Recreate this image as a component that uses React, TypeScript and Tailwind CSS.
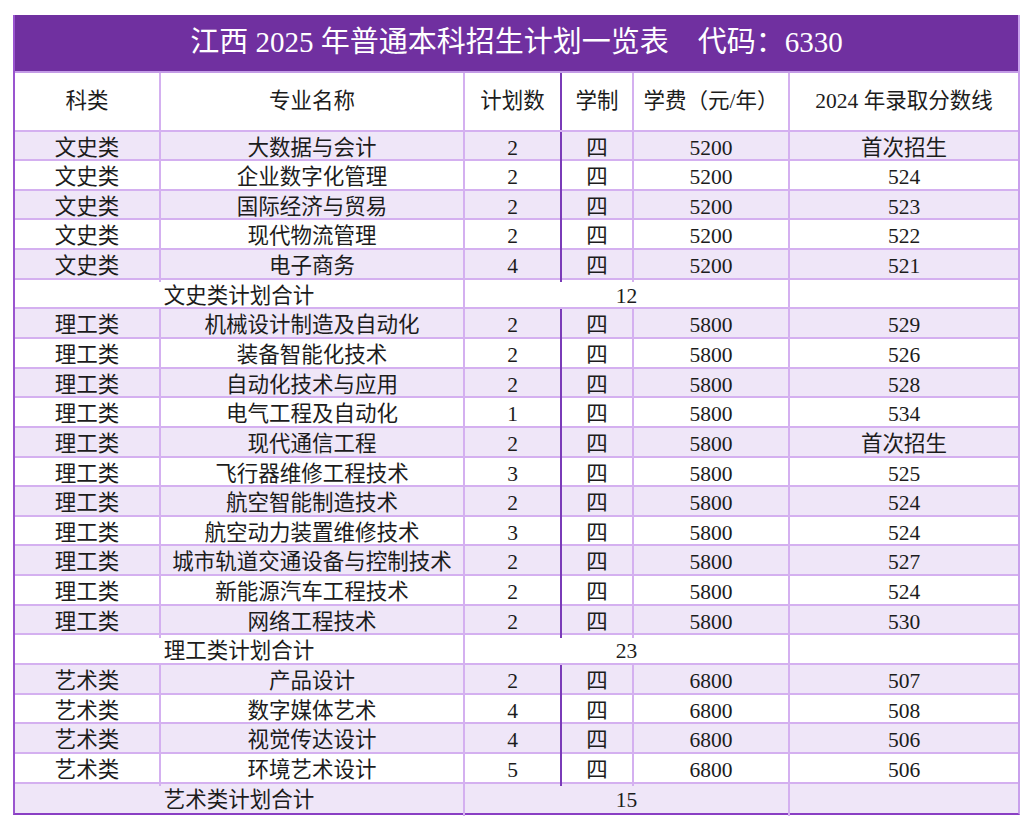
import React from "react";

type Row =
  | { kind: "data"; cat: string; name: string; n: string; fee: string; score: string }
  | { kind: "sum"; label: string; total: string };

const rows: Row[] = [
  { kind: "data", cat: "文史类", name: "大数据与会计", n: "2", fee: "5200", score: "首次招生" },
  { kind: "data", cat: "文史类", name: "企业数字化管理", n: "2", fee: "5200", score: "524" },
  { kind: "data", cat: "文史类", name: "国际经济与贸易", n: "2", fee: "5200", score: "523" },
  { kind: "data", cat: "文史类", name: "现代物流管理", n: "2", fee: "5200", score: "522" },
  { kind: "data", cat: "文史类", name: "电子商务", n: "4", fee: "5200", score: "521" },
  { kind: "sum", label: "文史类计划合计", total: "12" },
  { kind: "data", cat: "理工类", name: "机械设计制造及自动化", n: "2", fee: "5800", score: "529" },
  { kind: "data", cat: "理工类", name: "装备智能化技术", n: "2", fee: "5800", score: "526" },
  { kind: "data", cat: "理工类", name: "自动化技术与应用", n: "2", fee: "5800", score: "528" },
  { kind: "data", cat: "理工类", name: "电气工程及自动化", n: "1", fee: "5800", score: "534" },
  { kind: "data", cat: "理工类", name: "现代通信工程", n: "2", fee: "5800", score: "首次招生" },
  { kind: "data", cat: "理工类", name: "飞行器维修工程技术", n: "3", fee: "5800", score: "525" },
  { kind: "data", cat: "理工类", name: "航空智能制造技术", n: "2", fee: "5800", score: "524" },
  { kind: "data", cat: "理工类", name: "航空动力装置维修技术", n: "3", fee: "5800", score: "524" },
  { kind: "data", cat: "理工类", name: "城市轨道交通设备与控制技术", n: "2", fee: "5800", score: "527" },
  { kind: "data", cat: "理工类", name: "新能源汽车工程技术", n: "2", fee: "5800", score: "524" },
  { kind: "data", cat: "理工类", name: "网络工程技术", n: "2", fee: "5800", score: "530" },
  { kind: "sum", label: "理工类计划合计", total: "23" },
  { kind: "data", cat: "艺术类", name: "产品设计", n: "2", fee: "6800", score: "507" },
  { kind: "data", cat: "艺术类", name: "数字媒体艺术", n: "4", fee: "6800", score: "508" },
  { kind: "data", cat: "艺术类", name: "视觉传达设计", n: "4", fee: "6800", score: "506" },
  { kind: "data", cat: "艺术类", name: "环境艺术设计", n: "5", fee: "6800", score: "506" },
  { kind: "sum", label: "艺术类计划合计", total: "15" },
];

const cell = "flex items-center justify-center border-r-2 border-[#d4b0f0] whitespace-nowrap";
const darkCell = "flex items-center justify-center border-r-2 border-[#7a3bb8] whitespace-nowrap";
const lastCell = "flex items-center justify-center whitespace-nowrap";
const cols = "grid grid-cols-[146px_304px_97px_72px_156px_1fr]";

export default function App() {
  return (
    <div
      className="min-h-[837px] bg-white pt-[15px] pl-[13px] text-[#1c1c1c]"
      style={{ fontFamily: '"Liberation Serif", "Noto Sans CJK SC", serif' }}
    >
      <div className="w-[1007px] border-l-2 border-r-2 border-b-2 border-l-[#9a55cf] border-r-[#c9a0ec] border-b-[#8a3fc4]">
        <div className="h-[58px] bg-[#7030a0] border-b-2 border-[#c39be6] flex items-center justify-center text-white text-[29px] whitespace-pre">
          江西 2025 年普通本科招生计划一览表　代码：6330
        </div>
        <div className={`${cols} h-[58.5px] border-b-2 border-[#d4b0f0] bg-white text-[21.5px]`}>
          <div className={cell}>科类</div>
          <div className={cell}>专业名称</div>
          <div className={darkCell}>计划数</div>
          <div className={cell}>学制</div>
          <div className={cell}>学费（元/年）</div>
          <div className={lastCell}>2024 年录取分数线</div>
        </div>
        {rows.map((r, i) => {
          const bg = i % 2 === 0 ? "bg-[#efe6f8]" : "bg-white";
          const isLast = i === rows.length - 1;
          const rowCls = `${cols} h-[29.65px] text-[21.5px] ${bg} ${isLast ? "" : "border-b-2 border-[#d4b0f0]"}`;
          if (r.kind === "sum") {
            return (
              <div key={i} className={rowCls}>
                <div className={`${cell} col-span-2`}>{r.label}</div>
                <div className={`${cell} col-span-3`}>{r.total}</div>
                <div className={lastCell}></div>
              </div>
            );
          }
          return (
            <div key={i} className={rowCls}>
              <div className={cell}>{r.cat}</div>
              <div className={cell}>{r.name}</div>
              <div className={darkCell}>{r.n}</div>
              <div className={cell}>四</div>
              <div className={cell}>{r.fee}</div>
              <div className={lastCell}>{r.score}</div>
            </div>
          );
        })}
      </div>
    </div>
  );
}
